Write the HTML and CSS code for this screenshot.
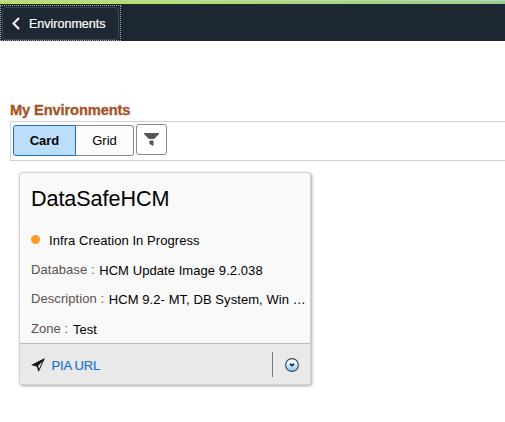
FILE: index.html
```html
<!DOCTYPE html>
<html lang="en">
<head>
<meta charset="utf-8">
<title>My Environments</title>
<link rel="stylesheet" href="styles.css">
</head>
<body>
<div class="accent"></div>
<header class="topbar">
  <a class="back"><span class="back-inner">
    <svg class="chevron" width="8" height="13" viewBox="0 0 8 13"><path d="M7 1 1.5 6.5 7 12" fill="none" stroke="#fff" stroke-width="2"/></svg>
    <span class="back-label">Environments</span>
  </span></a>
</header>
<main>
  <h1 class="heading">My Environments</h1>
  <div class="toolbar">
    <div class="segments"><button class="segment selected">Card</button><button class="segment">Grid</button></div>
    <button class="filter" aria-label="Filter"><svg width="15" height="13" viewBox="0 0 15 13"><path d="M0 0h15v1L10 6H5L0 1z M5.5 7.5h4V13L5.5 11z" fill="#555"/></svg></button>
  </div>
  <article class="card">
    <div class="card-body">
      <h2 class="name">DataSafeHCM</h2>
      <div class="row status"><i class="dot"></i><span>Infra Creation In Progress</span></div>
      <div class="row"><span class="key">Database :</span><span class="value">HCM Update Image 9.2.038</span></div>
      <div class="row"><span class="key">Description :</span><span class="value">HCM 9.2- MT, DB System, Win …</span></div>
      <div class="row"><span class="key">Zone :</span><span class="value">Test</span></div>
    </div>
    <footer class="card-footer">
      <svg class="arrow" width="14" height="14" viewBox="0 0 14 14"><path d="M14 0 0 7l5.6 1.4L7.7 14z" fill="#111"/><path d="M11.6 3.2 7 8l1 2.9z" fill="#e9e9e9"/></svg>
      <a class="link">PIA URL</a>
      <span class="divider"></span>
      <svg class="more" width="14" height="14" viewBox="0 0 14 14"><defs><linearGradient id="g" x2="0" y2="1"><stop offset=".15" stop-color="#fff"/><stop offset=".9" stop-color="#8fceff"/></linearGradient></defs><circle cx="7" cy="7" r="6.4" fill="url(#g)" stroke="#3d464d" stroke-width="1.1"/><path d="m5 5.9 2 1.8 2-1.8" fill="none" stroke="#222" stroke-width="1.7"/></svg>
    </footer>
  </article>
</main>
</body>
</html>
```
FILE: styles.css
```css
* { box-sizing: border-box; }
body { margin: 0; min-height: 100vh; background: #fff; color: #000; font: 13px/16px "Liberation Sans", Arial, sans-serif; overflow: hidden; }
svg { display: block; flex: none; }
.accent { height: 4px; border-top: 1px solid #cbcbcb; background: linear-gradient(90deg, #b5e655, #b0e45c 30%, #92d38c); }
.topbar { height: 37px; padding-top: 1px; background: #1e2832; }
.back { display: block; width: 121px; height: 36px; padding: 1px; border: 1px dotted #a5abb0; }
.back-inner { display: flex; align-items: center; width: 117px; height: 33px; padding-left: 9px; border: 1px solid #3c454e; border-radius: 4px; }
.back-label { margin-left: 9px; color: #fff; font-size: 12.5px; -webkit-text-stroke: .2px #fff; }
main { padding-top: 60px; }
.heading { margin: 0 0 0 10px; height: 20px; font-size: 14.7px; line-height: 18px; letter-spacing: -.14px; color: #a5521f; -webkit-text-stroke: .3px #a5521f; }
.toolbar { display: flex; height: 40px; margin-left: 10px; padding: 2px; border: 1px solid #cfd1d8; border-right: 0; }
.segments { display: flex; width: 121px; height: 31px; margin-top: 1px; }
.segment { width: 58px; padding: 0; border: 1px solid #838b93; border-left: 0; border-radius: 0 3px 3px 0; background: #fbfbfb; color: #000; font: 13px "Liberation Sans", sans-serif; }
.selected { width: 63px; border: 1px solid #1d6fc0; border-radius: 3px 0 0 3px; background: #bbdffb; font-weight: bold; }
.filter { display: flex; align-items: center; justify-content: center; width: 31px; height: 31px; margin-left: 2px; padding: 0; border: 1px solid #838b93; border-radius: 3px; background: #fff; }
.card { width: 292px; height: 213px; margin: 11px 0 0 19px; border: 1px solid #d2d2d2; border-radius: 3px; background: #f9f9f9; box-shadow: 1px 1px 3px #aaa; overflow: hidden; }
.card-body { height: 170px; padding: 11px 0 0 11px; }
.name { margin: 0; height: 42px; font-size: 21.6px; line-height: 30px; font-weight: normal; letter-spacing: -.08px; }
.row { display: flex; height: 29.5px; line-height: 30px; letter-spacing: .07px; white-space: nowrap; }
.dot { width: 9px; height: 9px; margin: 9px 9px 0 0; border-radius: 50%; background: #ff9a26; }
.key { color: #59514f; margin-right: 4.6px; line-height: 28px; }
.value { line-height: 30px; }
.card-footer { display: flex; align-items: center; height: 42px; padding: 0 11px; border-top: 1px solid #bcbcbc; background: #e9e9e9; }
.link { margin: 2px 0 0 6.5px; color: #1d72ce; letter-spacing: -.2px; -webkit-text-stroke: .2px #1d72ce; }
.divider { width: 1px; height: 25px; margin-left: auto; background: #777; }
.more { margin-left: 12px; }
```
